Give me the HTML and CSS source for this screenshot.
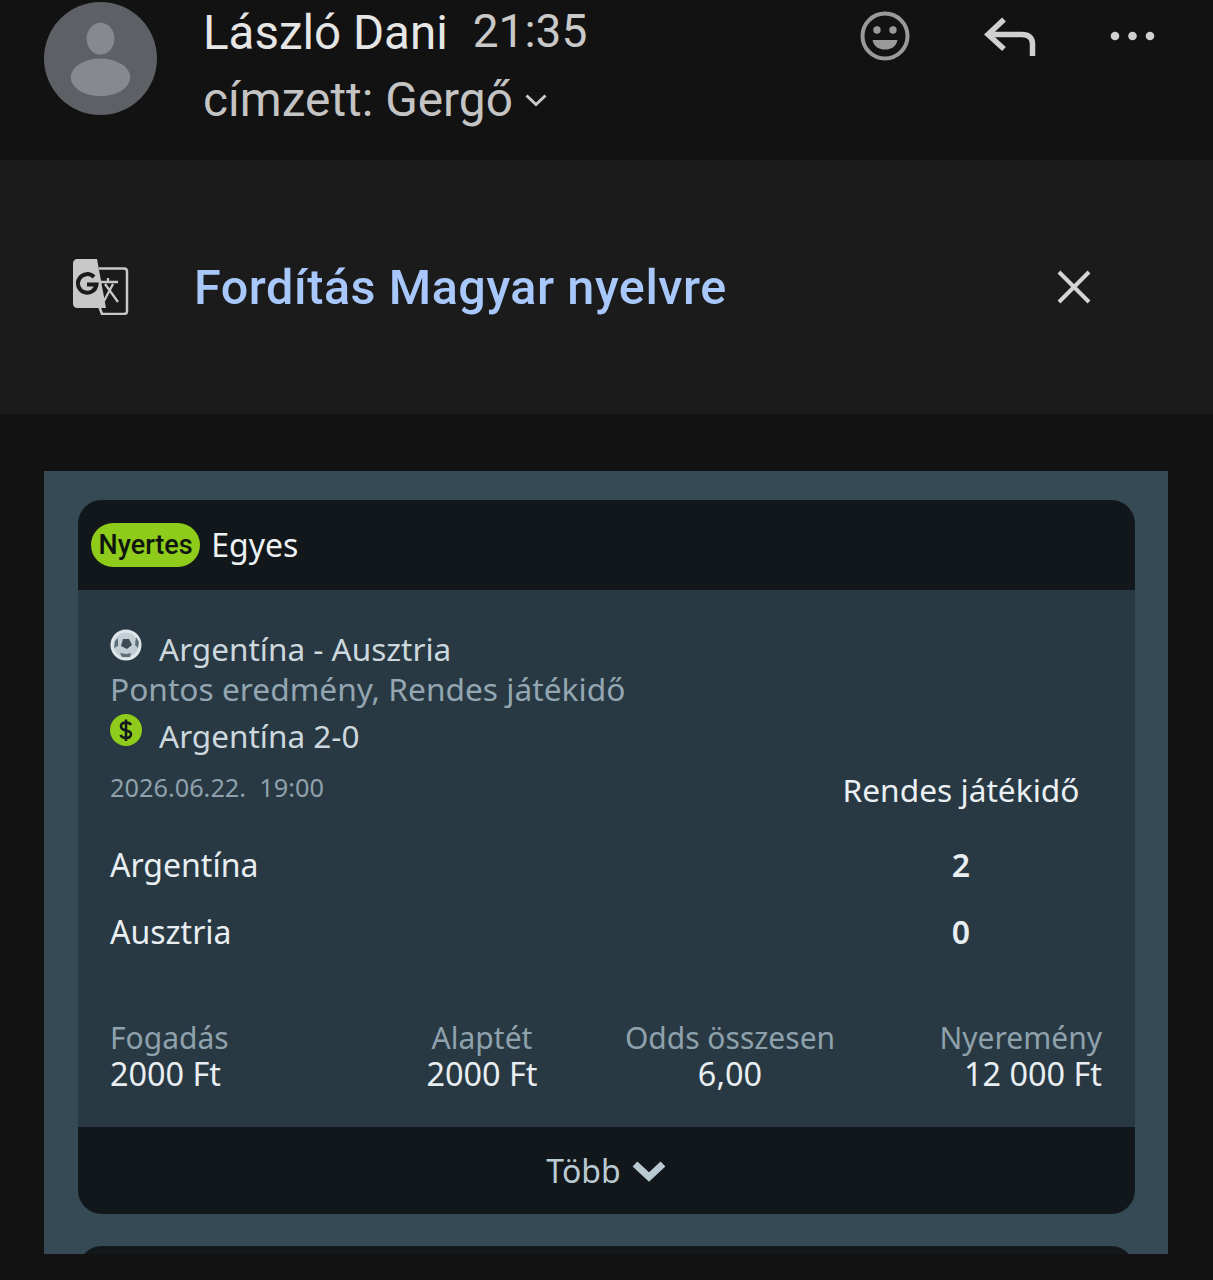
FILE: index.html
```html
<!DOCTYPE html>
<html lang="hu">
<head>
<meta charset="utf-8">
<title>Levél</title>
<link rel="stylesheet" href="styles.css">
</head>
<body>
<header class="mail-head">
  <svg class="avatar" viewBox="0 0 114 114" width="113" height="113">
    <circle cx="57" cy="57" r="57" fill="#5d6064"/>
    <ellipse cx="57" cy="37" rx="14" ry="16" fill="#86898d"/>
    <ellipse cx="57" cy="76" rx="30" ry="19" fill="#86898d"/>
  </svg>
  <div class="sender">
    <div class="sender-top"><span class="name">László Dani</span><span class="time">21:35</span></div>
    <div class="recipient"><span>címzett: Gergő</span>
      <svg class="caret" viewBox="0 0 24 14" width="24" height="14"><path d="M2.5 2.5 12 11.5 21.500 2.500" fill="none" stroke="#c9c9c9" stroke-width="3"/></svg>
    </div>
  </div>
  <div class="actions">
    <svg class="ic-smile" viewBox="0 0 50 50" width="50" height="50">
      <circle cx="25" cy="25" r="22.500" fill="none" stroke="#9a9a9a" stroke-width="4"/>
      <circle cx="17" cy="19" r="3.700" fill="#9a9a9a"/><circle cx="33" cy="19" r="3.700" fill="#9a9a9a"/>
      <path d="M12.500 29H37.500C36 36 31 38.500 25 38.500S14 36 12.500 29Z" fill="#9a9a9a"/>
    </svg>
    <svg class="ic-reply" viewBox="0 0 52 40" width="52" height="40">
      <path d="M20 2.500 4 17.500 20 32M5 17.500H38C45 17.500 48.500 21 48.500 27V39" fill="none" stroke="#d0d0d0" stroke-width="5.500"/>
    </svg>
    <svg class="ic-more" viewBox="0 0 46 10" width="46" height="10">
      <circle cx="5" cy="5" r="4.300" fill="#d0d0d0"/><circle cx="22.500" cy="5" r="4.300" fill="#d0d0d0"/><circle cx="40" cy="5" r="4.300" fill="#d0d0d0"/>
    </svg>
  </div>
</header>

<section class="translate">
  <svg class="ic-translate" viewBox="0 0 56 56" width="56" height="56">
    <path d="M26 9.500H51C53 9.500 54 10.500 54 12.500V52C54 54 53 55 51 55H29L26 47" fill="#1b1b1b" stroke="#c8c8c8" stroke-width="2.500"/>
    <path d="M27 23H45M35 19V23M32 25 45 43M40 25 31 42" fill="none" stroke="#c8c8c8" stroke-width="2.300"/>
    <path d="M4 0H24L33 49H4C2 49 0 47 0 45V4C0 2 2 0 4 0Z" fill="#c8c8c8"/>
    <path d="M21 18A9.300 9.300 0 1 0 23.500 25.500H14" fill="none" stroke="#1b1b1b" stroke-width="4"/>
  </svg>
  <span class="translate-label">Fordítás Magyar nyelvre</span>
  <svg class="ic-close" viewBox="0 0 34 34" width="34" height="34"><path d="M2 2 32 32M32 2 2 32" fill="none" stroke="#d4d4d4" stroke-width="4"/></svg>
</section>

<main class="panel">
  <article class="bet">
    <div class="bet-head"><span class="badge">Nyertes</span><span class="bet-type">Egyes</span></div>
    <div class="bet-body">
      <div class="row-icon">
        <svg class="ic-small ic-ball" viewBox="0 0 32 32" width="32" height="32">
          <circle cx="16" cy="16" r="14" fill="#c3ced4" stroke="#dfe6ea" stroke-width="3"/>
          <path d="M13 10 19 10 22 16 17 20 11 17Z" fill="#3c4c57"/>
          <path d="M5 12 8 9 8 17 4 19ZM26 8 29 13 28 19 25 16ZM10 24 16 25 21 24 20 28 12 28Z" fill="#5f6f79"/>
        </svg>
        <span class="match">Argentína - Ausztria</span>
      </div>
      <div class="market">Pontos eredmény, Rendes játékidő</div>
      <div class="row-icon pick-row">
        <svg class="ic-small ic-dollar" viewBox="0 0 32 32" width="32" height="32">
          <circle cx="16" cy="16" r="16" fill="#8fcb1a"/>
          <path d="M21 11C20 9 18 8.500 16 8.500 13 8.500 11 10 11 12.500 11 18 21 15 21 20 21 22.500 19 24 16 24 13.500 24 11.500 23 10.500 21M16 5.500V27" fill="none" stroke="#13191d" stroke-width="2.600"/>
        </svg>
        <span class="match">Argentína 2-0</span>
      </div>
      <div class="score-grid">
        <span class="date">2026.06.22.  19:00</span><span class="score-head">Rendes játékidő</span>
        <span class="team">Argentína</span><span class="score">2</span>
        <span class="team">Ausztria</span><span class="score">0</span>
      </div>
      <div class="totals">
        <div class="total"><span class="t-label">Fogadás</span><span class="t-value">2000 Ft</span></div>
        <div class="total t-mid"><span class="t-label">Alaptét</span><span class="t-value">2000 Ft</span></div>
        <div class="total t-mid"><span class="t-label">Odds összesen</span><span class="t-value">6,00</span></div>
        <div class="total t-end"><span class="t-label">Nyeremény</span><span class="t-value">12 000 Ft</span></div>
      </div>
    </div>
    <div class="bet-foot"><span>Több</span>
      <svg viewBox="0 0 36 26" width="36" height="26"><path d="M4 6 18 19 32 6" fill="none" stroke="#b9cad3" stroke-width="7"/></svg>
    </div>
  </article>
  <div class="bet-next"></div>
</main>
</body>
</html>
```
FILE: styles.css
```css
* { box-sizing: border-box; }
html, body { margin: 0; height: 1280px; overflow: hidden; background: #121212; }
body { font-family: Roboto, "Liberation Sans", sans-serif; }

.mail-head { height: 160px; padding: 2px 57px 0 44px; display: flex; align-items: flex-start; background: #121212; }
.avatar { flex: none; }
.sender { margin-left: 46px; }
.sender-top { display: flex; align-items: baseline; height: 58px; padding-top: 5px; }
.name { font-size: 47.500px; line-height: 52px; color: #e6e6e6; }
.time { margin-left: 25px; font-size: 46px; line-height: 52px; color: #c9c9c9; position: relative; top: -2px; }
.recipient { display: flex; align-items: center; gap: 11px; height: 50px; font-size: 47.800px; line-height: 50px; color: #c4c4c4; margin-top: 15px; }
.recipient span { display: block; }
.actions { margin-left: auto; display: flex; align-items: center; height: 68px; }
.ic-smile { margin-right: 74px; }
.ic-reply { margin-right: 74px; margin-top: 2px; }

.translate { height: 254px; padding: 0 122px 0 73px; display: flex; align-items: center; background: #1b1b1b; }
.ic-translate { flex: none; }
.translate-label { margin-left: 65px; font-size: 48.500px; letter-spacing: 0.550px; font-weight: 500; color: #a8c7fa; }
.ic-close { margin-left: auto; }

.panel { margin: 57px 45px 0 44px; height: 783px; padding: 29px 33px 0 34px; background: #354a54; overflow: hidden; }
.bet { height: 714px; border-radius: 24px; overflow: hidden; display: flex; flex-direction: column; background: #283943; font-family: "Noto Sans", sans-serif; }
.bet-head { height: 90px; display: flex; align-items: center; padding-left: 13px; background: #12171b; }
.badge { padding: 0 7.500px; height: 44px; line-height: 44px; border-radius: 22px; background: #8fcb1a; color: #0e1410; font-family: Roboto, sans-serif; font-size: 27px; font-weight: 500; }
.bet-type { margin-left: 11px; margin-bottom: 2px; font-size: 32px; color: #eef2f4; }
.bet-body { flex: 1; padding: 36px 33px 0 32px; }
.row-icon { display: flex; align-items: flex-start; height: 48px; }
.ic-small { flex: none; }
.ic-ball { margin-top: 3px; }
.ic-dollar { margin-top: 1px; }
.match { margin-left: 17px; margin-top: 2px; font-size: 31.500px; line-height: 42px; color: #cdd8de; }
.market { margin-top: -6px; font-size: 31.700px; line-height: 42px; color: #93a6b1; }
.pick-row { margin-top: 3px; }
.score-grid { display: grid; grid-template-columns: 1fr 282px; margin-top: -5px; }
.date { white-space: pre; font-size: 25.300px; line-height: 62px; height: 66px; margin-bottom: 10px; color: #8fa1ac; }
.score-head { text-align: center; font-size: 31.700px; line-height: 68px; height: 68px; margin-bottom: 8px; color: #eaf0f3; }
.team { font-size: 32px; line-height: 66.500px; color: #e8eef1; }
.score { text-align: center; font-size: 32px; line-height: 66.500px; font-weight: 600; color: #e8eef1; }
.totals { display: grid; grid-template-columns: 1fr 1fr 1fr 1fr; margin-top: 55px; }
.total { display: flex; flex-direction: column; line-height: 36px; }
.t-label { color: #8fa1ac; font-size: 30px; }
.t-value { margin-top: -1px; color: #e8eef1; font-size: 32.400px; }
.t-mid { align-items: center; }
.t-end { align-items: flex-end; }
.bet-foot { height: 87px; display: flex; align-items: center; justify-content: center; gap: 10px; background: #12171b; color: #b9cad3; font-size: 32px; }
.bet-next { height: 60px; margin-top: 32px; border-radius: 24px 24px 0 0; background: #12171b; }
```
